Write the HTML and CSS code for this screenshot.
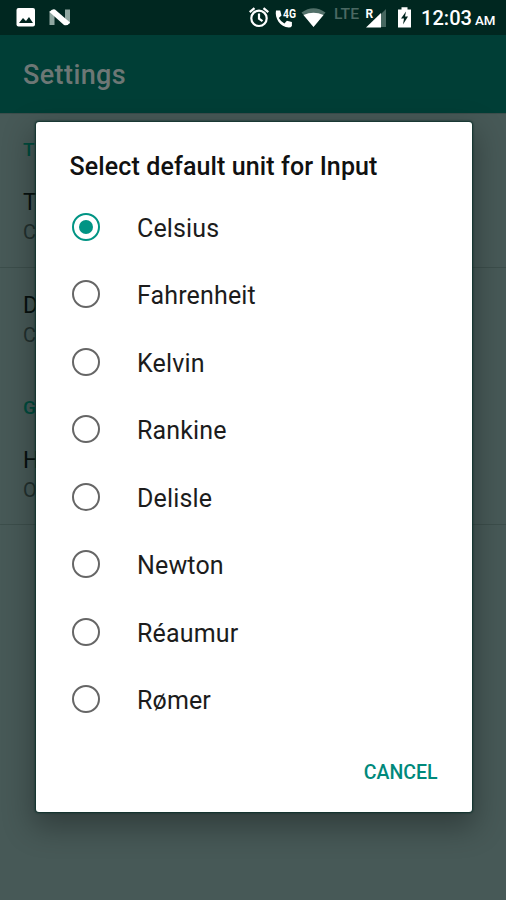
FILE: index.html
```html
<!DOCTYPE html>
<html lang="en">
<head>
<meta charset="utf-8">
<title>Settings</title>
<link rel="stylesheet" href="styles.css">
</head>
<body>
<div class="screen">
  <header class="status">
    <svg class="status-icons" viewBox="0 0 506 34">
      <rect x="16.500" y="8" width="18.500" height="18.500" rx="2" fill="#fff"/>
      <path d="M19 23l4-5 3 3 3-4 4 6z" fill="#00251f"/>
      <path d="M49.500 11h5v14h-5zM65 9.500h5v14h-5z" fill="#8fa6a0"/>
      <path d="M49.500 12Q52 8.500 55 9.500L70 22.500Q68 26 64 25z" fill="#fff"/>
      <g fill="none" stroke="#fff" stroke-width="2.200">
        <circle cx="259" cy="18.300" r="7.700"/>
        <path d="M259 13.500v5.200l3.500 2.500M249.700 12.200l4.800-4M268.300 12.200l-4.800-4"/>
      </g>
      <path d="M276 10.500h4.200l1.300 5-2.700 2.400q2 3.600 5.600 5.500l2.500-2.600 5 1.300v4q-1 1.500-3 1.500C280 27 274.500 18 276 10.500z" fill="#fff"/>
      <path d="M301.500 12.500Q313.500 4 325.500 12.500L313.500 27z" fill="#527069"/>
      <path d="M303.500 15Q313.500 10.500 323.500 15L313.500 27z" fill="#fff"/>
      <path d="M386 9v18h-18z" fill="#466760"/>
      <path d="M381 13v14.500h-15z" fill="#fff"/>
      <path d="M398 9.500h3.500v-2.300h6v2.300h3.500v18h-13z" fill="#fff"/>
      <path d="M406 11.500l-5 7h3l-1 6 5-8h-3z" fill="#00251f"/>
      <g class="status-text">
        <text x="283" y="17.500" class="four-g" textLength="13" lengthAdjust="spacingAndGlyphs">4G</text>
        <text x="334" y="18.500" class="lte" textLength="25" lengthAdjust="spacingAndGlyphs">LTE</text>
        <text x="365.500" y="17.500" class="roam">R</text>
        <text x="421" y="25" class="clock" textLength="51" lengthAdjust="spacingAndGlyphs">12:03</text>
        <text x="475" y="25" class="ampm" textLength="20.500" lengthAdjust="spacingAndGlyphs">AM</text>
      </g>
    </svg>
  </header>
  <div class="toolbar">Settings</div>
  <main class="prefs">
    <section class="group">
      <h2>T</h2>
      <div class="pref"><b>T</b><span>C</span></div>
      <div class="pref second"><b>D</b><span>C</span></div>
    </section>
    <section class="group general">
      <h2>G</h2>
      <div class="pref"><b>H</b><span>O</span></div>
    </section>
  </main>
  <div class="dialog" role="dialog">
    <h1>Select default unit for Input</h1>
    <ul>
      <li class="checked"><i></i><span>Celsius</span></li>
      <li><i></i><span>Fahrenheit</span></li>
      <li><i></i><span>Kelvin</span></li>
      <li><i></i><span>Rankine</span></li>
      <li><i></i><span>Delisle</span></li>
      <li><i></i><span>Newton</span></li>
      <li><i></i><span>Réaumur</span></li>
      <li><i></i><span>Rømer</span></li>
    </ul>
    <button>CANCEL</button>
  </div>
</div>
</body>
</html>
```
FILE: styles.css
```css
* { box-sizing: border-box; margin: 0; padding: 0; }
body { font-family: Roboto, sans-serif; background: #475957; }
.screen { position: relative; width: 506px; height: 900px; overflow: hidden; background: #475957; }
.status { height: 35px; background: #002720; }
.status-icons { display: block; width: 506px; height: 34px; }
.status-text { fill: #fff; font-weight: 500; }
.four-g { font-size: 13px; font-weight: 700; }
.lte { font-size: 15.500px; fill: #4b6963; }
.roam { font-size: 12px; font-weight: 700; }
.clock { font-size: 19.500px; }
.ampm { font-size: 13.500px; }
.toolbar { height: 78px; padding-left: 23px; background: #003e36; color: #6d7775; font-size: 27px; font-weight: 500; line-height: 81px; letter-spacing: 0.4px; }
.prefs { border-top: 1px solid #3c4d4b; }
.group h2 { height: 74px; padding: 24px 0 0 23px; font-size: 19px; line-height: 24px; font-weight: 500; color: #004b3d; }
.pref { height: 80px; padding-left: 23px; border-bottom: 1px solid #3c4e4b; }
.pref b, .pref span { display: block; font-weight: 400; }
.pref b { font-size: 23px; line-height: 30px; color: #07110f; }
.pref span { font-size: 20px; line-height: 28px; color: #22302e; }
.pref.second { height: 104px; padding-top: 23px; border-bottom: 0; }
.general h2 { padding-top: 24px; height: 74px; }
.general .pref { height: 79px; }
.dialog { position: absolute; left: 35.5px; top: 122px; width: 436px; height: 690px; padding: 28px 34px 0; background: #fff; border-radius: 3px; box-shadow: 0 0 2px 1px #0c302a, 0 12px 30px 4px rgba(0,0,0,.3); }
.dialog h1 { height: 43px; font-size: 25px; line-height: 34px; font-weight: 500; letter-spacing: .12px; color: #111; white-space: nowrap; }
.dialog li { display: flex; align-items: center; height: 67.5px; list-style: none; font-size: 25px; letter-spacing: .15px; color: #1c1c1c; }
.dialog li span { padding-top: 3px; }
.dialog li i { display: flex; align-items: center; justify-content: center; width: 28px; height: 28px; margin: 0 37px 0 2.500px; border: 2.500px solid #666; border-radius: 50%; }
.dialog li.checked i { border-color: #009484; }
.dialog li.checked i::before { content: ""; width: 14px; height: 14px; border-radius: 50%; background: #009484; }
.dialog button { display: block; margin: 28px 0 0 auto; border: 0; background: none; color: #00897b; font: 500 19.500px/24px Roboto, sans-serif; }
```
